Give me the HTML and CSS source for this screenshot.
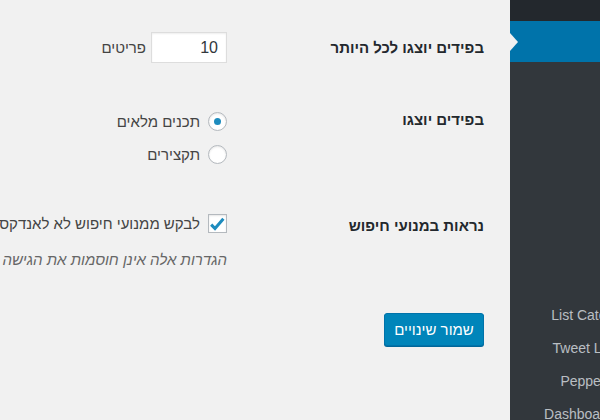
FILE: index.html
```html
<!DOCTYPE html>
<html lang="he" dir="rtl">
<head>
<meta charset="utf-8">
<title>הגדרות קריאה</title>
<link rel="stylesheet" href="styles.css">
</head>
<body>
<div class="admin">
  <nav class="adminmenu">
    <div class="menu-prev"></div>
    <div class="menu-current"></div>
    <ul class="submenu">
      <li>כללי</li>
      <li>כתיבה</li>
      <li class="current">קריאה</li>
      <li>דיונים</li>
      <li>מדיה</li>
      <li>קישורים</li>
      <li>פרטיות</li>
      <li>List Category Tab</li>
      <li>Tweet Link Setup</li>
      <li>Pepper Settings</li>
      <li>Dashboard Widget</li>
    </ul>
  </nav>
  <main class="content">
    <form class="form-table">
      <div class="row row-posts">
        <div class="th">בפידים יוצגו לכל היותר</div>
        <div class="td">
          <label class="inline">
            <input class="small-text" type="number" value="10">
            <span>פריטים</span>
          </label>
        </div>
      </div>
      <div class="row row-feed">
        <div class="th">בפידים יוצגו</div>
        <div class="td">
          <ul class="choices">
            <li><label class="choice"><input class="radio" type="radio" name="feed" checked><span>תכנים מלאים</span></label></li>
            <li><label class="choice"><input class="radio" type="radio" name="feed"><span>תקצירים</span></label></li>
          </ul>
        </div>
      </div>
      <div class="row row-search">
        <div class="th">נראות במנועי חיפוש</div>
        <div class="td">
          <label class="choice">
            <span class="cb">
              <input class="checkbox" type="checkbox" checked>
              <svg class="cb-mark" width="18" height="18" viewBox="0 0 18 18" aria-hidden="true"><path d="M3.2 10.6 L7 14.6 L15.4 4.8" fill="none" stroke="#1e8cbe" stroke-width="3" stroke-linejoin="miter"/></svg>
            </span>
            <span class="nowrap">לבקש ממנועי חיפוש לא לאנדקס את האתר</span>
          </label>
          <p class="description">הגדרות אלה אינן חוסמות את הגישה לאתר. מנועי החיפוש יחליטו אם לכבד את הבקשה.</p>
        </div>
      </div>
      <div class="submit">
        <button type="button" class="button-primary">שמור שינויים</button>
      </div>
    </form>
  </main>
</div>
</body>
</html>
```
FILE: styles.css
```css
html, body {
  margin: 0;
  height: 100%;
  overflow: hidden;
  background: #f1f1f1;
}
body {
  font-family: "Liberation Sans", Arial, "DejaVu Sans", sans-serif;
  font-size: 15px;
  color: #444;
}
.admin {
  display: flex;
  height: 420px;
  margin-right: -72px;
}
.adminmenu {
  width: 162px;
  flex: none;
  background: #32373c;
  font-size: 14px;
}
.menu-prev {
  height: 21px;
  background: #23282d;
}
.menu-current {
  position: relative;
  height: 41px;
  background: #0073aa;
}
.menu-current::after {
  content: "";
  position: absolute;
  left: 0;
  top: 50%;
  margin-top: -9px;
  border: 9px solid transparent;
  border-left-width: 8px;
  border-right-width: 0;
  border-left-color: #f1f1f1;
}
.submenu {
  list-style: none;
  margin: 0;
  padding: 6px 0 8px;
}
.submenu li {
  line-height: 33px;
  padding: 0 12px;
  white-space: nowrap;
  color: rgba(240, 245, 250, 0.72);
}
.submenu li.current {
  color: #fff;
  font-weight: bold;
}
.content {
  flex: 1;
  min-width: 0;
  overflow: hidden;
  padding: 32px 26px 0 0;
}
.form-table {
  margin: 0;
}
.row {
  display: grid;
  grid-template-columns: 257px 1fr;
  align-items: start;
}
.th {
  font-weight: bold;
  color: #23282d;
  line-height: 18px;
}
.td {
  min-width: 0;
}
.row-posts .th { padding-top: 7px; }
.row-feed { margin-top: 48px; }
.row-search { margin-top: 51px; }
.row-search .th { padding-top: 3px; }

.inline {
  display: flex;
  align-items: center;
  gap: 5px;
}
.small-text {
  box-sizing: border-box;
  width: 76px;
  height: 31px;
  margin: 0;
  padding: 0 8px;
  border: 1px solid #ddd;
  background: #fff;
  box-shadow: inset 0 1px 2px rgba(0, 0, 0, 0.07);
  font: 16px "Liberation Sans", Arial, sans-serif;
  color: #32373c;
  text-align: right;
  -moz-appearance: textfield;
  appearance: textfield;
}
.small-text::-webkit-inner-spin-button,
.small-text::-webkit-outer-spin-button {
  -webkit-appearance: none;
  margin: 0;
}
.choices {
  list-style: none;
  margin: 1px 0 0;
  padding: 0;
  display: flex;
  flex-direction: column;
  gap: 15px;
}
.choice {
  display: flex;
  align-items: center;
  gap: 8px;
  height: 18px;
}
.radio, .checkbox {
  -webkit-appearance: none;
  appearance: none;
  box-sizing: border-box;
  width: 19px;
  height: 19px;
  margin: 0;
  border: 1px solid #b4b9be;
  background: #fff;
  box-shadow: inset 0 1px 2px rgba(0, 0, 0, 0.1);
  flex: none;
}
.radio {
  border-radius: 50%;
  display: grid;
  place-items: center;
}
.radio:checked::before {
  content: "";
  width: 7px;
  height: 7px;
  border-radius: 50%;
  background: #1e8cbe;
}
.cb {
  position: relative;
  display: block;
  width: 19px;
  height: 19px;
  flex: none;
}
.checkbox {
  display: block;
}
.cb-mark {
  position: absolute;
  top: 0;
  left: 0;
}
.nowrap {
  white-space: nowrap;
}
.description {
  margin: 18px 0 0;
  line-height: 20px;
  font-style: italic;
  color: #666;
  white-space: nowrap;
}
.submit {
  margin-top: 43px;
}
.button-primary {
  width: 100px;
  height: 33px;
  margin: 0;
  padding: 0;
  border: 1px solid #0073aa;
  border-radius: 3px;
  background: #0085ba;
  box-shadow: 0 1px 0 #006799;
  color: #fff;
  font: 15px "Liberation Sans", Arial, sans-serif;
  cursor: pointer;
}
```
